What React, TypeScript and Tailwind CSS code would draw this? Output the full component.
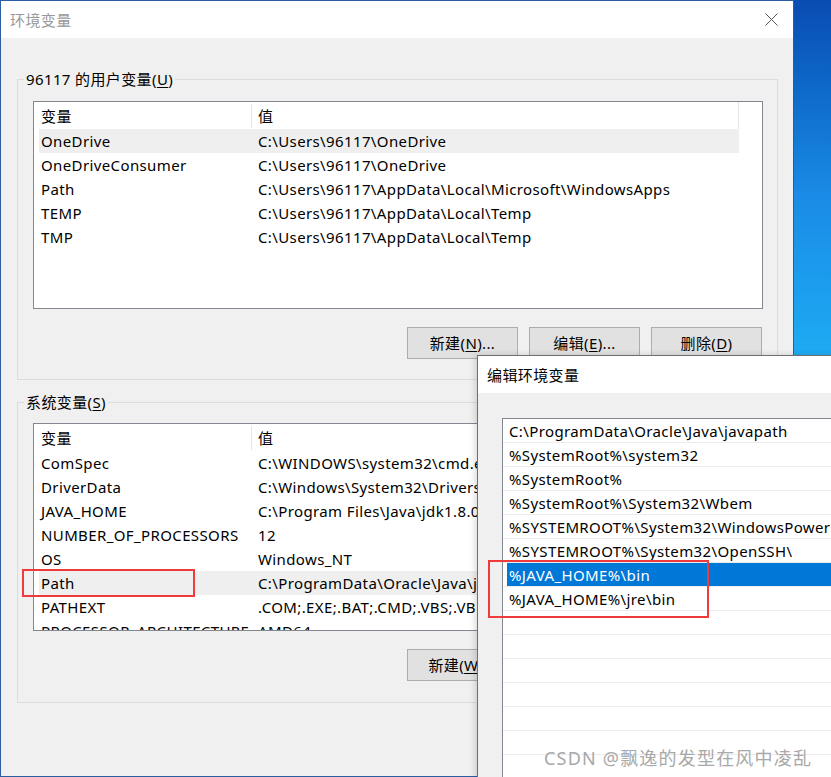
import React from "react"

const font = { fontFamily: '"Noto Sans", "Noto Sans CJK SC", sans-serif' }

const userVars: [string, string][] = [
  ["OneDrive", "C:\\Users\\96117\\OneDrive"],
  ["OneDriveConsumer", "C:\\Users\\96117\\OneDrive"],
  ["Path", "C:\\Users\\96117\\AppData\\Local\\Microsoft\\WindowsApps"],
  ["TEMP", "C:\\Users\\96117\\AppData\\Local\\Temp"],
  ["TMP", "C:\\Users\\96117\\AppData\\Local\\Temp"],
]

const sysVars: [string, string][] = [
  ["ComSpec", "C:\\WINDOWS\\system32\\cmd.exe"],
  ["DriverData", "C:\\Windows\\System32\\Drivers\\DriverData"],
  ["JAVA_HOME", "C:\\Program Files\\Java\\jdk1.8.0_291"],
  ["NUMBER_OF_PROCESSORS", "12"],
  ["OS", "Windows_NT"],
  ["Path", "C:\\ProgramData\\Oracle\\Java\\javapath;C:\\WINDOWS\\system32"],
  ["PATHEXT", ".COM;.EXE;.BAT;.CMD;.VBS;.VBE;.JS;.JSE;.WSF;.WSH;.MSC"],
  ["PROCESSOR_ARCHITECTURE", "AMD64"],
]

const pathEntries = [
  "C:\\ProgramData\\Oracle\\Java\\javapath",
  "%SystemRoot%\\system32",
  "%SystemRoot%",
  "%SystemRoot%\\System32\\Wbem",
  "%SYSTEMROOT%\\System32\\WindowsPowerShell\\v1.0\\",
  "%SYSTEMROOT%\\System32\\OpenSSH\\",
  "%JAVA_HOME%\\bin",
  "%JAVA_HOME%\\jre\\bin",
  "", "", "", "", "", "", "", "",
]

function VarList({ rows, selected }: { rows: [string, string][]; selected: number }) {
  return (
    <div className="ml-[15px] h-[208px] w-[730px] overflow-hidden border border-[#828790] bg-white pl-[5px]">
      {/* header */}
      <div className="flex h-[27px] w-[700px] items-center border-r border-[#e5e5e5]">
        <div className="w-[212px] pl-[2px]">变量</div>
        <div className="h-[24px] w-px bg-[#e5e5e5]" />
        <div className="pl-[6px]">值</div>
      </div>
      {rows.map(([name, value], i) => (
        <div
          key={name}
          className={`flex h-[24px] w-[700px] items-center whitespace-nowrap ${i === selected ? "bg-[#efefef]" : ""}`}
        >
          <div className="w-[212px] pl-[2px]">{name}</div>
          <div className="pl-[7px]">{value}</div>
        </div>
      ))}
    </div>
  )
}

function WinButton({ label, mn, tail }: { label: string; mn: string; tail: string }) {
  return (
    <button className="flex h-[32px] w-[111px] items-center justify-center border border-[#adadad] bg-[#e1e1e1] text-black">
      {label}(<u className="underline-offset-2">{mn}</u>){tail}
    </button>
  )
}

export default function App() {
  return (
    <div
      className="relative h-[777px] w-[831px] overflow-hidden bg-gradient-to-b from-[#0a4cb2] via-[#1a8be6] via-25% to-[#1eaaf3] to-45% text-[15px] leading-[20px] tracking-[0.38px] text-black"
      style={font}
    >
      {/* main window: 环境变量 */}
      <div className="absolute left-0 top-0 flex h-[777px] w-[794px] flex-col border border-[#2b5ea0] bg-[#f0f0f0]">
        <div className="flex h-[37px] shrink-0 items-center justify-between bg-white pl-[9px] pr-[15px]">
          <span className="text-[#999999]">环境变量</span>
          <svg width="13" height="13" viewBox="0 0 13 13">
            <path d="M0.5 0.5 L12.5 12.5 M12.5 0.5 L0.5 12.5" stroke="#555" strokeWidth="1" />
          </svg>
        </div>

        <fieldset className="ml-[16px] mt-[31px] w-[761px] shrink-0 border border-[#dcdcdc] pb-[20px]">
          <legend className="ml-[6px] px-[2px]">
            96117 的用户变量(<u className="underline-offset-2">U</u>)
          </legend>
          <div className="mt-[12px]">
            <VarList rows={userVars} selected={0} />
          </div>
          <div className="mt-[18px] flex justify-end gap-[11px] pr-[15px]">
            <WinButton label="新建" mn="N" tail="..." />
            <WinButton label="编辑" mn="E" tail="..." />
            <WinButton label="删除" mn="D" tail="" />
          </div>
        </fieldset>

        <fieldset className="ml-[16px] mt-[12px] w-[761px] shrink-0 border border-[#dcdcdc] pb-[21px]">
          <legend className="ml-[6px] px-[2px]">
            系统变量(<u className="underline-offset-2">S</u>)
          </legend>
          <div className="mt-[11px]">
            <VarList rows={sysVars} selected={5} />
          </div>
          <div className="mt-[18px] flex justify-end gap-[11px] pr-[15px]">
            <WinButton label="新建" mn="W" tail="..." />
            <WinButton label="编辑" mn="I" tail="..." />
            <WinButton label="删除" mn="L" tail="" />
          </div>
        </fieldset>
      </div>

      {/* edit dialog: 编辑环境变量 */}
      <div className="absolute left-[477px] top-[355px] h-[460px] w-[420px] overflow-hidden border border-[#6f6f6f] bg-[#f0f0f0] shadow-[-2px_0_6px_rgba(0,0,0,0.15)]">
        <div className="flex h-[37px] items-center bg-white pl-[9px]">编辑环境变量</div>
        <div className="ml-[24px] mt-[25px] border-l border-t border-[#828790] bg-white">
          {pathEntries.map((p, i) => (
            <div key={i} className="h-[24px] border-b border-[#ececec]">
              <div
                className={`ml-[4px] flex h-[23px] items-center whitespace-nowrap pl-[2px] ${i === 6 ? "bg-[#0078d7] text-white" : ""}`}
              >
                {p}
              </div>
            </div>
          ))}
        </div>
      </div>

      {/* red annotations */}
      <div className="absolute left-[22px] top-[569px] h-[28px] w-[173px] border-2 border-[#ef3b3b]" />
      <div className="absolute left-[488px] top-[560px] h-[58px] w-[221px] border-2 border-[#ef3b3b]" />

      {/* watermark */}
      <div className="absolute left-[544px] top-[746px] text-[18px] leading-[24px] tracking-[1.2px] text-[#a8a8a8]">
        CSDN @飘逸的发型在风中凌乱
      </div>
    </div>
  )
}
